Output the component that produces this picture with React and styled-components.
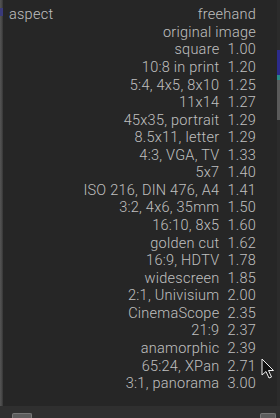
import React from 'react';
import styled, { createGlobalStyle } from 'styled-components';

const Global = createGlobalStyle`
  html, body { margin: 0; padding: 0; background: #2f2f2f; }
  body { width: 280px; height: 418px; overflow: hidden; font-family: Roboto, "Noto Sans", sans-serif; }
`;

const ratios = [
  ['square', '1.00'],
  ['10:8 in print', '1.20'],
  ['5:4, 4x5, 8x10', '1.25'],
  ['11x14', '1.27'],
  ['45x35, portrait', '1.29'],
  ['8.5x11, letter', '1.29'],
  ['4:3, VGA, TV', '1.33'],
  ['5x7', '1.40'],
  ['ISO 216, DIN 476, A4', '1.41'],
  ['3:2, 4x6, 35mm', '1.50'],
  ['16:10, 8x5', '1.60'],
  ['golden cut', '1.62'],
  ['16:9, HDTV', '1.78'],
  ['widescreen', '1.85'],
  ['2:1, Univisium', '2.00'],
  ['CinemaScope', '2.35'],
  ['21:9', '2.37'],
  ['anamorphic', '2.39'],
  ['65:24, XPan', '2.71'],
  ['3:1, panorama', '3.00'],
];

const Screen = styled.div`
  position: relative;
  width: 280px;
  height: 418px;
  display: flex;
  flex-direction: column;
`;

const Top = styled.div`
  display: flex;
  height: 406px;
`;

const LeftEdge = styled.div`
  width: 3px;
  background: linear-gradient(to right, #555 0, #444 2px, #333 3px);
  display: flex;
  flex-direction: column;
`;

const EdgeMark = styled.div`
  margin-top: ${p => p.top}px;
  height: ${p => p.h}px;
  background: ${p => p.color};
`;

const RightEdge = styled.div`
  width: 3px;
  background: #2b2b2b;
  display: flex;
  flex-direction: column;
`;

const Panel = styled.div`
  flex: 1;
  background: #262626;
  padding: 6px 21px 0 6px;
  display: grid;
  grid-template-columns: 1fr auto auto;
  grid-auto-rows: 17.57px;
  column-gap: 8px;
  align-items: center;
  color: #c0c0c0;
  font-size: 14.5px;
  font-weight: 300;
  letter-spacing: 0.25px;
`;

const Label = styled.div`
  grid-column: 1;
  white-space: nowrap;
`;

const Wide = styled.div`
  grid-column: ${p => (p.full ? '1 / 4' : '2 / 4')};
  text-align: right;
  white-space: nowrap;
`;

const Name = styled.div`
  grid-column: 2;
  text-align: right;
  white-space: nowrap;
`;

const Value = styled.div`
  grid-column: 3;
  text-align: right;
`;

const Bottom = styled.div`
  flex: 1;
  background: #2f2f2f;
  display: flex;
  align-items: flex-end;
  justify-content: space-between;
  padding: 0 4px 0 12px;
`;

const Stub = styled.div`
  width: ${p => p.w}px;
  height: 4px;
  background: #5c5c5c;
  border: 1px solid #777;
  border-bottom: none;
  border-radius: 2px 2px 0 0;
`;

const Cursor = styled.svg`
  position: absolute;
  left: 261px;
  top: 358px;
`;

export default function App() {
  return (
    <Screen>
      <Global />
      <Top>
        <LeftEdge>
          <EdgeMark top={8} h={8} color="#3a3a7a" />
        </LeftEdge>
        <Panel>
          <Label>aspect</Label>
          <Wide>freehand</Wide>
          <Wide full>original image</Wide>
          {ratios.map(([n, v]) => (
            <React.Fragment key={n}>
              <Name>{n}</Name>
              <Value>{v}</Value>
            </React.Fragment>
          ))}
        </Panel>
        <RightEdge>
          <EdgeMark top={50} h={25} color="#2c2c8c" />
          <EdgeMark top={0} h={5} color="#2a8a8a" />
          <EdgeMark top={0} h={40} color="#5a5a5a" />
        </RightEdge>
      </Top>
      <Bottom>
        <Stub w={18} />
        <Stub w={14} />
      </Bottom>
      <Cursor width="14" height="22" viewBox="0 0 14 22">
        <path d="M1 1 L1 17 L5 13.5 L8 20 L10.5 19 L7.5 12.5 L12.5 12.5 Z" fill="#111" stroke="#eee" strokeWidth="1" strokeLinejoin="round" />
      </Cursor>
    </Screen>
  );
}
